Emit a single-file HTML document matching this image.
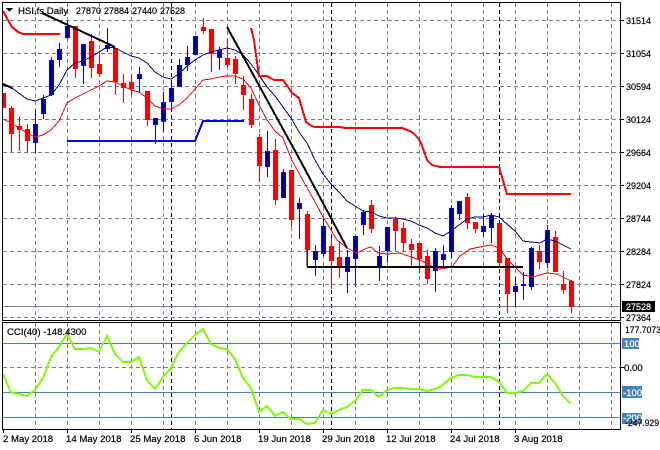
<!DOCTYPE html>
<html><head><meta charset="utf-8"><style>
html,body{margin:0;padding:0;background:#fff;width:660px;height:450px;overflow:hidden}
svg{display:block}
text{font-family:"Liberation Sans",sans-serif;font-size:9.6px;fill:#000;stroke:#000;stroke-width:.2}
text.w{fill:#fff;stroke:#fff}
</style></head><body>
<svg width="660" height="450" viewBox="0 0 660 450" xmlns="http://www.w3.org/2000/svg" shape-rendering="crispEdges">
<defs>
<clipPath id="a"><rect x="3" y="3" width="617" height="317"/></clipPath>
<clipPath id="b"><rect x="3" y="323" width="617" height="106"/></clipPath>
</defs>
<rect width="660" height="450" fill="#fff"/>
<g clip-path="url(#a)">
<path fill="none" stroke="#708090" stroke-dasharray="4 3" d="M3 20.5H620M3 53.5H620M3 86.5H620M3 119.5H620M3 152.5H620M3 185.5H620M3 218.5H620M3 251.5H620M3 284.5H620M3 317.5H620M35.5 3V320M67.5 3V320M99.5 3V320M131.5 3V320M163.5 3V320M195.5 3V320M227.5 3V320M259.5 3V320M291.5 3V320M323.5 3V320M355.5 3V320M387.5 3V320M419.5 3V320M451.5 3V320M483.5 3V320M515.5 3V320M547.5 3V320M579.5 3V320M611.5 3V320"/>
<path fill="none" stroke="#000" stroke-dasharray="4 3" d="M171.5 3V320M331.5 3V320M499.5 3V320"/>
<path fill="none" stroke="#708090" d="M3 306.5H620"/>
<!-- red wicks -->
<path fill="none" stroke="#f00" d="M11.5 106V152M19.5 117V151M27.5 124V153M75.5 26V78M91.5 34V78M99.5 51V77M115.5 48V95M123.5 74V103M131.5 75V95M147.5 91V126M203.5 18V34M211.5 29V72M227.5 39V67M235.5 56V84M243.5 76V110M251.5 94V128M259.5 134V182M275.5 139V205M291.5 170V227M307.5 211V267M331.5 238V289M339.5 241V278M371.5 200V233M395.5 217V251M403.5 222V252M411.5 239V266M419.5 243V273M427.5 250V284M467.5 193V229M475.5 222V233M499.5 223V265M507.5 258V313M539.5 245V269M555.5 231V272M563.5 271V294M571.5 280V313"/>
<!-- red bodies -->
<path fill="#f00" d="M1 93h5v15h-5zM9 108h5v26h-5zM17 126h5v4h-5zM25 129h5v12h-5zM73 26h5v43h-5zM89 41h5v27h-5zM97 64h5v10h-5zM113 48h5v34h-5zM121 83h5v5h-5zM129 82h5v7h-5zM145 91h5v29h-5zM201 27h5v4h-5zM209 29h5v25h-5zM225 58h5v7h-5zM233 59h5v15h-5zM241 85h5v10h-5zM249 99h5v26h-5zM257 137h5v29h-5zM273 150h5v50h-5zM289 170h5v50h-5zM305 214h5v36h-5zM329 246h5v15h-5zM337 257h5v10h-5zM369 205h5v24h-5zM393 219h5v12h-5zM401 228h5v15h-5zM409 244h5v6h-5zM417 243h5v16h-5zM425 256h5v23h-5zM465 197h5v26h-5zM473 222h5v7h-5zM497 223h5v40h-5zM505 258h5v36h-5zM537 251h5v11h-5zM553 237h5v35h-5zM561 284h5v6h-5zM569 281h5v26h-5z"/>
<!-- blue wicks -->
<path fill="none" stroke="#00f" d="M35.5 110V153M43.5 95V119M51.5 57V96M59.5 43V67M67.5 21V39M83.5 44V84M107.5 28V52M139.5 67V92M155.5 118V144M163.5 92V132M171.5 84V110M179.5 59V87M187.5 46V71M195.5 36V55M219.5 47V70M267.5 131V177M283.5 169V198M299.5 198V239M315.5 245V276M323.5 217V256M347.5 250V293M355.5 236V287M363.5 210V235M379.5 246V281M387.5 227V262M435.5 248V292M443.5 245V268M451.5 205V258M459.5 201V220M483.5 214V236M491.5 213V243M515.5 277V307M523.5 272V300M531.5 247V290M547.5 225V268"/>
<!-- blue bodies -->
<path fill="#000080" stroke="#00f" d="M33.5 124.5h4v18h-4zM41.5 99.5h4v14h-4zM49.5 60.5h4v34h-4zM57.5 49.5h4v10h-4zM65.5 26.5h4v11h-4zM81.5 44.5h4v21h-4zM105.5 45.5h4v3h-4zM137.5 74.5h4v4h-4zM153.5 118.5h4v6h-4zM161.5 102.5h4v19h-4zM169.5 88.5h4v13h-4zM177.5 65.5h4v21h-4zM185.5 57.5h4v7h-4zM193.5 36.5h4v18h-4zM217.5 50.5h4v7h-4zM265.5 151.5h4v15h-4zM281.5 172.5h4v25h-4zM297.5 203.5h4v5h-4zM313.5 251.5h4v8h-4zM321.5 226.5h4v27h-4zM345.5 257.5h4v14h-4zM353.5 236.5h4v22h-4zM361.5 212.5h4v12h-4zM377.5 256.5h4v10h-4zM385.5 227.5h4v23h-4zM433.5 251.5h4v19h-4zM441.5 254.5h4v5h-4zM449.5 208.5h4v43h-4zM457.5 201.5h4v12h-4zM481.5 226.5h4v5h-4zM489.5 215.5h4v12h-4zM513.5 286.5h4v5h-4zM521.5 284.5h4v1h-4zM529.5 248.5h4v38h-4zM545.5 230.5h4v32h-4z"/>
<!-- moving averages -->
<path fill="none" stroke="#000080" d="M3 85L12 88L20 94L27 99L35 101L43 98L51 95L59 85L67 70L75 63L83 61L91 57L99 52L107 47L115 48L123 52L131 56L139 58L147 63L155 72L163 77L171 79L179 74L187 66L195 60L203 55L211 52L219 50L227 48L235 50L243 55L251 64L259 75L267 87L275 96L283 107L291 118L299 132L307 143L315 160L323 174L331 184L339 192L347 201L355 206L363 211L371 212L379 216L387 218L395 218L403 219L411 221L419 225L427 228L435 233L443 236L451 231L459 225L467 219L475 217L483 217L491 215L499 217L507 224L515 231L523 241L531 242L540 243L547 239L555 241L563 245L571 249"/>
<path fill="none" stroke="#f00" d="M3 119L11 123L19 128L27 133L35 137L43 135L51 130L59 121L67 103L75 98L83 94L91 90L99 86L107 81L115 82L123 86L131 90L139 92L147 98L155 106L163 109L171 109L179 105L187 98L195 89L203 80L211 79L219 77L227 76L235 76L243 79L251 88L259 105L267 120L275 131L283 138L291.700 160L316.700 205L323 217L330 228L337 240L347 248L357 253L367 248L371 247L378 253L387 254L400 253L411 257L420 260L433 267L440 269L452 267L460 256L470 249L485 246L491 245L499 248L508 260L523 275L533 277L547 273L557 274L571 281"/>
<!-- thick red envelope -->
<path fill="none" stroke="#f00" stroke-width="2" d="M3 11L8 20L12 27L18 32L23 34L60 34M251 28L254 40L256 55L259 76L267 76L272 79L274 80L283 80L288 87L292 93L299 98L301 105L306 122L310 125L314 127L340 127L345 128L402 128L407 130L412 132L418 138L421 143L427 160L432 165L440 167L499 167L507 194L571 194"/>
<!-- blue level -->
<path fill="none" stroke="#00f" stroke-width="2" d="M67 141H195L203 121H244"/>
<!-- black trends -->
<path fill="none" stroke="#000" stroke-width="2" d="M3 84L12 88M42 13L115 47M227 27L300 160L347 248M307 267H523"/>
<path fill="none" stroke="#000" d="M307 250V267"/>
</g>
<g clip-path="url(#b)">
<path fill="none" stroke="#708090" stroke-dasharray="4 3" d="M3 367.500H620M35.5 323V429M67.5 323V429M99.500 323V429M131.5 323V429M163.500 323V429M195.500 323V429M227.500 323V429M259.500 323V429M291.500 323V429M323.500 323V429M355.500 323V429M387.500 323V429M419.500 323V429M451.500 323V429M483.500 323V429M515.500 323V429M547.500 323V429M579.500 323V429M611.500 323V429"/>
<path fill="none" stroke="#000" stroke-dasharray="4 3" d="M171.500 323V429M331.500 323V429M499.500 323V429"/>
<path fill="none" stroke="#4682b4" d="M3 343.500H620M3 392.500H620M3 417.500H620"/>
<path fill="none" stroke="#7cfc00" stroke-width="2" d="M3 374L11 392.500L19 394L27 396L35 390L43 378L51 357L59 347L67 334L75 349L83 349L91 348L99 352L107 336L115 354L123 362L131 362L139 357L147 380L155 389L163 377L171 368L179 352L187 343L195 335L203 329L211 344L219 348L227 349L235 359L243 378L251 388L259 412L267 406L275 416L283 412L291 419L299 419L307 424L315 423L323 410L331 414L339 410L347 407L355 401L363 390L371 390L379 397L387 390L395 388L403 388L411 389L419 389L427 391L435 389L440 387L451 378L459 375L467 375L475 377L483 377L491 377L499 382L507 393L515 393L523 391L531 383L539 383L547 374L555 383L563 396L571 404"/>
</g>
<!-- frames -->
<path fill="none" stroke="#000" d="M2.500 2V321M2 2.500H621M620.500 2V321M2 320.500H621M2.500 322V430M2 322.500H621M620.500 322V430M2 429.500H621"/>
<!-- axis ticks -->
<path fill="none" stroke="#000" d="M621 20.500h3M621 53.500h3M621 86.500h3M621 119.500h3M621 152.500h3M621 185.500h3M621 218.500h3M621 251.500h3M621 284.500h3M621 317.500h3M621 367.500h3M3.500 430v3M67.500 430v3M131.500 430v3M195.500 430v3M259.500 430v3M323.500 430v3M387.500 430v3M451.500 430v3M515.500 430v3"/>
<path fill="#000" d="M6 8h7l-3.500 4z"/>
<text x="18" y="14">HSI,fs,Daily</text>
<text x="76" y="14" textLength="25" lengthAdjust="spacingAndGlyphs">27870</text><text x="104" y="14" textLength="25" lengthAdjust="spacingAndGlyphs">27884</text><text x="132" y="14" textLength="25" lengthAdjust="spacingAndGlyphs">27440</text><text x="160" y="14" textLength="25" lengthAdjust="spacingAndGlyphs">27528</text>
<text x="626" y="24" textLength="25" lengthAdjust="spacingAndGlyphs">31514</text><text x="626" y="57" textLength="25" lengthAdjust="spacingAndGlyphs">31054</text><text x="626" y="90" textLength="25" lengthAdjust="spacingAndGlyphs">30594</text><text x="626" y="123" textLength="25" lengthAdjust="spacingAndGlyphs">30124</text><text x="626" y="156" textLength="25" lengthAdjust="spacingAndGlyphs">29664</text><text x="626" y="189" textLength="25" lengthAdjust="spacingAndGlyphs">29204</text><text x="626" y="222" textLength="25" lengthAdjust="spacingAndGlyphs">28744</text><text x="626" y="255" textLength="25" lengthAdjust="spacingAndGlyphs">28284</text><text x="626" y="288" textLength="25" lengthAdjust="spacingAndGlyphs">27824</text><text x="626" y="321" textLength="25" lengthAdjust="spacingAndGlyphs">27364</text>
<rect x="622" y="301" width="33" height="11" fill="#000"/><text class="w" x="626" y="310" textLength="25" lengthAdjust="spacingAndGlyphs">27528</text>
<text x="7" y="335">CCI(40) -148.4300</text>
<text x="625" y="333" textLength="36" lengthAdjust="spacingAndGlyphs">177.7073</text>
<rect x="622" y="338" width="17" height="11" fill="#4682b4"/><text class="w" x="624" y="347">100</text>
<text x="624" y="371">0.00</text>
<rect x="622" y="386" width="20" height="12" fill="#4682b4"/><text class="w" x="623" y="396">-100</text>
<rect x="622" y="413" width="20" height="11" fill="#4682b4"/><text class="w" x="623" y="421">-200</text>
<text x="625" y="426" textLength="34" lengthAdjust="spacingAndGlyphs">-247.929</text>
<text x="3" y="442">2 May 2018</text><text x="66" y="442">14 May 2018</text><text x="130" y="442">25 May 2018</text><text x="194" y="442">6 Jun 2018</text><text x="258" y="442">19 Jun 2018</text><text x="322" y="442">29 Jun 2018</text><text x="386" y="442">12 Jul 2018</text><text x="450" y="442">24 Jul 2018</text><text x="514" y="442">3 Aug 2018</text>
</svg>
</body></html>
